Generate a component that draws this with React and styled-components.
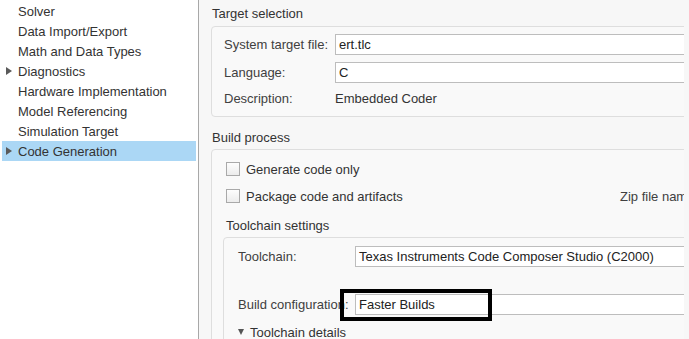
import React from "react";
import styled, { createGlobalStyle } from "styled-components";

const GlobalStyle = createGlobalStyle`
  html, body { margin: 0; padding: 0; overflow: hidden; }
  body {
    font-family: "Liberation Sans", Arial, sans-serif;
    font-size: 13px;
    color: #333;
    background: #fff;
  }
`;

const Window = styled.div`
  display: flex;
  width: 689px;
  height: 339px;
  overflow: hidden;
`;

const Sidebar = styled.nav`
  width: 198px;
  flex: none;
  background: #fff;
  border-right: 1px solid #a8a8a8;
  padding-top: 1px;
  box-sizing: content-box;
`;

const TreeItem = styled.div`
  display: flex;
  align-items: center;
  height: 20px;
  margin: 0 2px;
  padding-left: 4px;
  color: #333;
  background: ${(p) => (p.$selected ? "#abd7f5" : "transparent")};
  white-space: nowrap;
`;

const Expander = styled.span`
  width: 12px;
  flex: none;
  display: flex;
  align-items: center;
  &::before {
    content: "";
    display: ${(p) => (p.$show ? "block" : "none")};
    width: 0;
    height: 0;
    border-left: 6px solid #5a5a5a;
    border-top: 4px solid transparent;
    border-bottom: 4px solid transparent;
  }
`;

const Main = styled.main`
  flex: 1;
  display: flex;
  background: #f7f7f7;
  min-width: 0;
`;

const Viewport = styled.div`
  flex: 1;
  overflow: hidden;
  padding-left: 12px;
  min-width: 0;
`;

const Strip = styled.div`
  width: 5px;
  flex: none;
  background: #f7f7f7;
`;

const SectionTitle = styled.div`
  height: 16px;
  line-height: 16px;
  color: #333;
  white-space: nowrap;
  margin: ${(p) => p.$margin || "0"};
`;

const GroupBox = styled.div`
  width: ${(p) => p.$width || "560px"};
  border: 1px solid #dedede;
  border-radius: 4px;
  background: #f9f9f9;
  padding: ${(p) => p.$padding || "7px 0 7px 12px"};
  box-sizing: border-box;
  margin: ${(p) => p.$margin || "0"};
`;

const FieldRow = styled.div`
  display: grid;
  grid-template-columns: ${(p) => p.$labelWidth || "111px"} 1fr;
  align-items: center;
  height: 20px;
  margin-top: ${(p) => p.$gap || "0"};
`;

const Label = styled.span`
  color: #404040;
  white-space: nowrap;
`;

const ValueText = styled.span`
  color: #333;
  white-space: nowrap;
`;

const InputWrap = styled.div`
  position: relative;
  height: 21px;
`;

const Input = styled.div`
  height: 21px;
  box-sizing: border-box;
  border: 1px solid #bdbdbd;
  background: #fff;
  padding-left: 3px;
  line-height: 19px;
  color: #222;
  white-space: nowrap;
`;

const Highlight = styled.div`
  position: absolute;
  left: -15px;
  top: -5px;
  width: 152px;
  height: 32px;
  box-sizing: border-box;
  border: 4px solid #000;
  pointer-events: none;
`;

const CheckRow = styled.div`
  display: grid;
  grid-template-columns: 394px auto;
  align-items: center;
  height: 20px;
  margin: ${(p) => p.$margin || "0"};
  white-space: nowrap;
`;

const CheckLabel = styled.label`
  display: flex;
  align-items: center;
  gap: 6px;
  color: #333;
`;

const Box = styled.span`
  width: 14px;
  height: 14px;
  box-sizing: border-box;
  border: 1px solid #a9a9a9;
  background: linear-gradient(#fdfdfd, #ececec);
  flex: none;
`;

const Disclosure = styled.div`
  display: flex;
  align-items: center;
  gap: 6px;
  height: 16px;
  margin-top: 10px;
  color: #333;
  white-space: nowrap;
  &::before {
    content: "";
    width: 0;
    height: 0;
    border-top: 6px solid #555;
    border-left: 3.5px solid transparent;
    border-right: 3.5px solid transparent;
  }
`;

const tree = [
  { label: "Solver" },
  { label: "Data Import/Export" },
  { label: "Math and Data Types" },
  { label: "Diagnostics", expandable: true },
  { label: "Hardware Implementation" },
  { label: "Model Referencing" },
  { label: "Simulation Target" },
  { label: "Code Generation", expandable: true, selected: true },
];

export default function App() {
  return (
    <>
      <GlobalStyle />
      <Window>
        <Sidebar>
          {tree.map((t) => (
            <TreeItem key={t.label} $selected={t.selected}>
              <Expander $show={t.expandable} />
              {t.label}
            </TreeItem>
          ))}
        </Sidebar>
        <Main>
          <Viewport>
            <SectionTitle $margin="6px 0 4px 1px">Target selection</SectionTitle>
            <GroupBox $padding="7px 0 8px 12px">
              <FieldRow>
                <Label>System target file:</Label>
                <Input>ert.tlc</Input>
              </FieldRow>
              <FieldRow $gap="8px">
                <Label>Language:</Label>
                <Input>C</Input>
              </FieldRow>
              <FieldRow $gap="6px">
                <Label>Description:</Label>
                <ValueText>Embedded Coder</ValueText>
              </FieldRow>
            </GroupBox>

            <SectionTitle $margin="13px 0 3px 1px">Build process</SectionTitle>
            <GroupBox $padding="9px 0 0 11px" $width="600px">
              <CheckRow $margin="0 0 0 3px">
                <CheckLabel>
                  <Box />
                  Generate code only
                </CheckLabel>
              </CheckRow>
              <CheckRow $margin="7px 0 0 3px">
                <CheckLabel>
                  <Box />
                  Package code and artifacts
                </CheckLabel>
                <Label>Zip file name:</Label>
              </CheckRow>
              <SectionTitle $margin="12px 0 3px 3px">Toolchain settings</SectionTitle>
              <GroupBox $padding="8px 0 10px 14px" $width="540px">
                <FieldRow $labelWidth="117px">
                  <Label>Toolchain:</Label>
                  <Input>Texas Instruments Code Composer Studio (C2000)</Input>
                </FieldRow>
                <FieldRow $labelWidth="117px" $gap="28px">
                  <Label>Build configuration:</Label>
                  <InputWrap>
                    <Input>Faster Builds</Input>
                    <Highlight />
                  </InputWrap>
                </FieldRow>
                <Disclosure>Toolchain details</Disclosure>
              </GroupBox>
            </GroupBox>
          </Viewport>
          <Strip />
        </Main>
      </Window>
    </>
  );
}
